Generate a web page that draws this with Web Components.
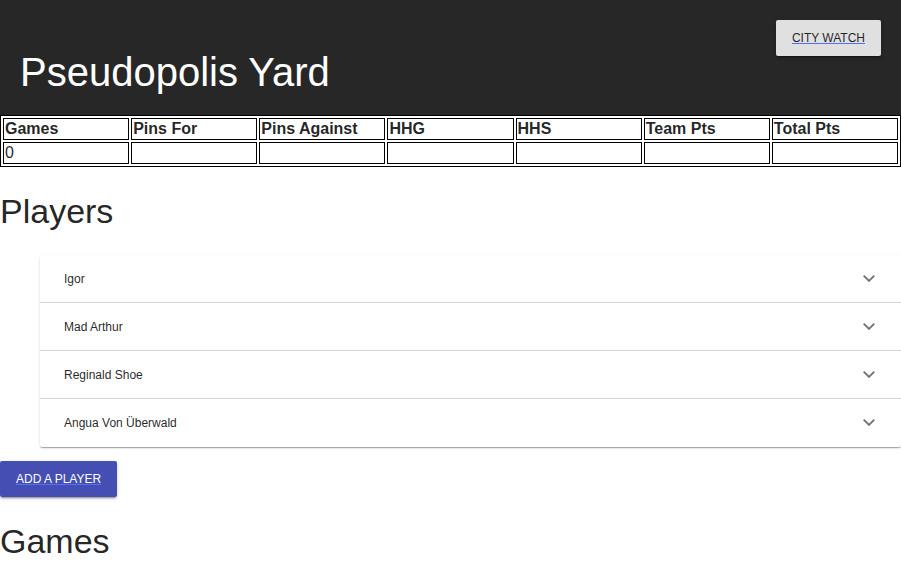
<!DOCTYPE html>
<html lang="en">
<head>
<meta charset="utf-8">
<title>Pseudopolis Yard</title>
<style>
body { margin: 0; background: #fff; color: rgba(0,0,0,.87); font: 16px/20px "Liberation Sans", Arial, sans-serif; }
</style>
</head>
<body>
<team-page></team-page>
<script>
const define = (name, html, setup) => customElements.define(name, class extends HTMLElement {
  connectedCallback() {
    if (this.shadowRoot) return;
    this.attachShadow({ mode: "open" }).innerHTML = html;
    if (setup) setup(this.shadowRoot, this);
  }
});

define("link-button", `
<style>
:host { display: inline-block; }
a { display: block; box-sizing: border-box; height: 36px; padding: 0 16px; border-radius: 2px; font-size: 12px; line-height: 36px;
  text-transform: uppercase; text-decoration: underline #536dfe; white-space: nowrap; color: rgba(0,0,0,.87); background: #e0e0e0;
  box-shadow: 0 3px 1px -2px rgba(0,0,0,.2), 0 2px 2px rgba(0,0,0,.14), 0 1px 5px rgba(0,0,0,.12); }
:host([primary]) a { color: #fff; background: #444eb3; }
</style>
<a href="#"><slot></slot></a>`);

define("page-header", `
<style>
:host { display: block; background: #272727; color: #fff; padding: 20px 20px 15px; }
nav { display: flex; justify-content: flex-end; height: 24px; }
h1 { margin: 0; font-size: 40px; line-height: 56px; font-weight: 400; }
</style>
<nav><slot name="action"></slot></nav>
<h1><slot></slot></h1>`);

define("stats-table", `
<style>
:host { display: block; }
table { width: 100%; table-layout: fixed; border: 1px solid #000; border-spacing: 2px; color: rgba(0,0,0,.87); }
th, td { border: 1px solid #000; padding: 1px; height: 18px; line-height: 18px; text-align: left; }
</style>
<table>
<thead><tr><th>Games</th><th>Pins For</th><th>Pins Against</th><th>HHG</th><th>HHS</th><th>Team Pts</th><th>Total Pts</th></tr></thead>
<tbody><tr><td>0</td><td></td><td></td><td></td><td></td><td></td><td></td></tr></tbody>
</table>`);

define("section-title", `
<style>
:host { display: block; }
h2 { margin: 0; padding: 24px 0; font-size: 34px; line-height: 40px; font-weight: 400; }
</style>
<h2><slot></slot></h2>`);

define("player-row", `
<style>
:host { display: block; border-bottom: 1px solid #d4d4d4; }
:host(:last-child) { border-bottom-color: transparent; }
button { display: flex; width: 100%; align-items: center; justify-content: space-between; height: 47px; padding: 0 24px;
  border: 0; background: none; font: 12px/20px "Liberation Sans", Arial, sans-serif; color: inherit; text-align: left; cursor: pointer; }
svg { width: 16px; height: 16px; }
</style>
<button type="button" aria-expanded="false"><slot></slot>
<svg viewBox="0 0 16 16" fill="none" stroke="#757575" stroke-width="2" aria-hidden="true"><path d="M2.7 4.6 8 9.9 13.3 4.6"/></svg></button>`,
(root) => {
  const b = root.querySelector("button");
  b.addEventListener("click", () => b.setAttribute("aria-expanded", String(b.getAttribute("aria-expanded") !== "true")));
});

define("player-list", `
<style>
:host { display: block; margin-left: 40px; border-radius: 2px; background: #fff;
  box-shadow: 0 2px 1px -1px rgba(0,0,0,.2), 0 1px 1px rgba(0,0,0,.14), 0 1px 3px rgba(0,0,0,.12); }
</style>
<slot></slot>`);

define("team-page", `
<style>
:host { display: block; overflow: hidden; }
.add { padding-top: 14px; }
</style>
<page-header>Pseudopolis Yard<link-button slot="action">City Watch</link-button></page-header>
<stats-table></stats-table>
<section-title>Players</section-title>
<player-list>
<player-row>Igor</player-row>
<player-row>Mad Arthur</player-row>
<player-row>Reginald Shoe</player-row>
<player-row>Angua Von Überwald</player-row>
</player-list>
<div class="add"><link-button primary>Add a player</link-button></div>
<section-title>Games</section-title>`);
</script>
</body>
</html>
